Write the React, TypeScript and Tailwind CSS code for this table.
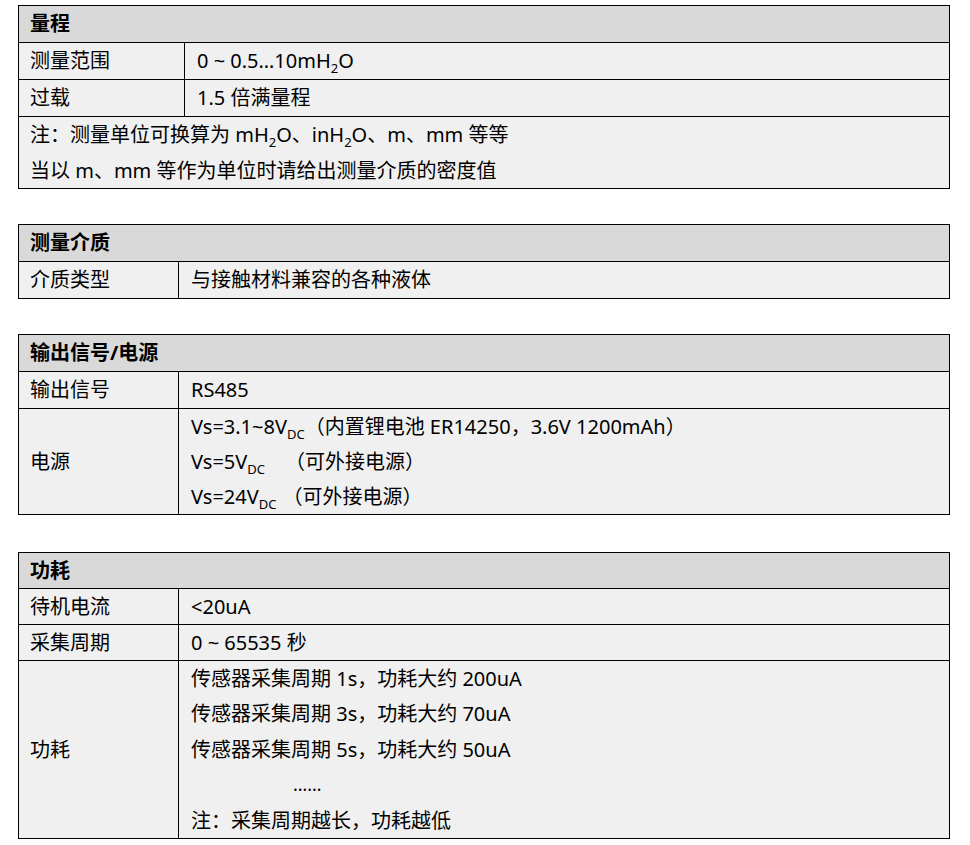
const font = {
  fontFamily: '"Noto Sans", "Noto Sans CJK SC", sans-serif',
};

function Sub({ children }: { children: React.ReactNode }) {
  return <sub className="text-[13px] align-baseline relative top-[5px]">{children}</sub>;
}

function Cols({ first }: { first: string }) {
  return (
    <colgroup>
      <col className={first} />
      <col />
    </colgroup>
  );
}

function Header({ title, lh = 'leading-[36px]' }: { title: string; lh?: string }) {
  return (
    <tr>
      <td colSpan={2} className={`border border-black bg-[#d9d9d9] px-[11px] font-bold ${lh}`}>
        {title}
      </td>
    </tr>
  );
}

function Row({ label, children, lh = 'leading-[36px]' }: { label: string; children: React.ReactNode; lh?: string }) {
  return (
    <tr>
      <td className={`border border-black bg-[#f0f0f0] pl-[11px] align-middle ${lh}`}>{label}</td>
      <td className={`border border-black bg-[#f0f0f0] pl-[12px] ${lh}`}>{children}</td>
    </tr>
  );
}

export default function App() {
  return (
    <div className="min-h-screen bg-white pt-[5px] px-[18px] text-[20px] text-black" style={font}>
      <table className="w-[932px] border-collapse table-fixed">
        <Cols first="w-[166px]" />
        <tbody>
          <Header title="量程" />
          <Row label="测量范围">
            0 ~ 0.5…10mH<Sub>2</Sub>O
          </Row>
          <Row label="过载">1.5 倍满量程</Row>
          <tr>
            <td colSpan={2} className="border border-black bg-[#f0f0f0] px-[11px] leading-[35.5px]">
              <div>注：测量单位可换算为 mH<Sub>2</Sub>O、inH<Sub>2</Sub>O、m、mm 等等</div>
              <div>当以 m、mm 等作为单位时请给出测量介质的密度值</div>
            </td>
          </tr>
        </tbody>
      </table>

      <table className="mt-[35px] w-[932px] border-collapse table-fixed">
        <Cols first="w-[160px]" />
        <tbody>
          <Header title="测量介质" />
          <Row label="介质类型">与接触材料兼容的各种液体</Row>
        </tbody>
      </table>

      <table className="mt-[35px] w-[932px] border-collapse table-fixed">
        <Cols first="w-[160px]" />
        <tbody>
          <Header title="输出信号/电源" />
          <Row label="输出信号">RS485</Row>
          <tr>
            <td className="border border-black bg-[#f0f0f0] pl-[11px] align-middle">电源</td>
            <td className="border border-black bg-[#f0f0f0] pl-[12px] leading-[35px]">
              <div>
                Vs=3.1~8V<Sub>DC</Sub>（内置锂电池 ER14250，3.6V 1200mAh）
              </div>
              <div>
                Vs=5V<Sub>DC</Sub>
                <span className="ml-[20px]">（可外接电源）</span>
              </div>
              <div>
                Vs=24V<Sub>DC</Sub>
                <span className="ml-[6px]">（可外接电源）</span>
              </div>
            </td>
          </tr>
        </tbody>
      </table>

      <table className="mt-[37px] w-[932px] border-collapse table-fixed">
        <Cols first="w-[160px]" />
        <tbody>
          <Header title="功耗" lh="leading-[35px]" />
          <Row label="待机电流" lh="leading-[35px]">&lt;20uA</Row>
          <Row label="采集周期" lh="leading-[35px]">0 ~ 65535 秒</Row>
          <tr>
            <td className="border border-black bg-[#f0f0f0] pl-[11px] align-middle">功耗</td>
            <td className="border border-black bg-[#f0f0f0] pl-[12px] leading-[35.4px]">
              <div>传感器采集周期 1s，功耗大约 200uA</div>
              <div>传感器采集周期 3s，功耗大约 70uA</div>
              <div>传感器采集周期 5s，功耗大约 50uA</div>
              <div className="pl-[102px] text-[18px]">……</div>
              <div>注：采集周期越长，功耗越低</div>
            </td>
          </tr>
        </tbody>
      </table>
    </div>
  );
}
